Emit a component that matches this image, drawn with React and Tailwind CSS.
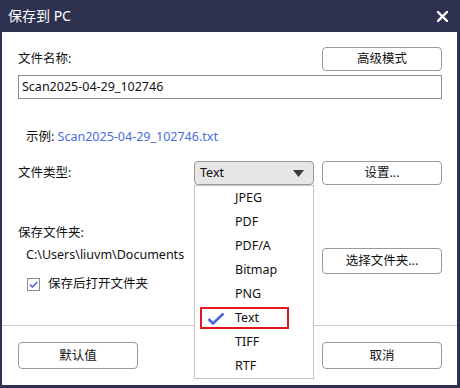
import React from 'react';

const Btn = ({ children, h = 'h-[24px]', className = '' }) => (
    <button className={`w-[120px] ${h} border border-[#9a9a9a] rounded-[4px] bg-white text-[12.5px] text-[#111] flex items-center justify-center ${className}`}>
        {children}
    </button>
);

const formats = ['JPEG', 'PDF', 'PDF/A', 'Bitmap', 'PNG', 'Text', 'TIFF', 'RTF'];

export default function App() {
    return (
        <div className="w-[460px] h-[388px] bg-[#2e3250] pl-[2px] pr-[3px] pb-[3px] flex flex-col font-['Noto_Sans','Noto_Sans_CJK_SC',sans-serif] text-[12.5px] leading-[18px] text-[#111]">
            {/* title bar */}
            <div className="h-[32px] shrink-0 flex items-center justify-between pl-[6px] pr-[9px] text-white">
                <span className="text-[14px]">保存到 PC</span>
                <svg width="11" height="11" viewBox="0 0 11 11">
                    <path d="M1 1 L10 10 M10 1 L1 10" stroke="white" strokeWidth="2.4" strokeLinecap="square" />
                </svg>
            </div>

            <div className="flex-1 bg-white flex flex-col">
                <div className="flex-1 pl-[16px] pr-[15px] pt-[15px]">
                    <div className="flex items-center justify-between h-[24px]">
                        <span>文件名称:</span>
                        <Btn>高级模式</Btn>
                    </div>
                    <div className="mt-[4px] h-[24px] border border-[#8c8c8c] flex items-center px-[3px]">
                        Scan2025-04-29_102746
                    </div>

                    <div className="mt-[29px] pl-[8px]">
                        示例: <span className="text-[#4a6ee0]">Scan2025-04-29_102746.txt</span>
                    </div>

                    <div className="mt-[15px] flex items-center h-[24px]">
                        <span className="w-[176px]">文件类型:</span>
                        <div className="relative w-[120px] h-[24px]">
                            <div className="h-full border border-[#9a9a9a] rounded-[4px] bg-[#e6e6e6] flex items-center justify-between pl-[5px] pr-[9px]">
                                <span>Text</span>
                                <svg width="11" height="7" viewBox="0 0 11 7">
                                    <path d="M0 0 H11 L5.5 7 Z" fill="#3c3c3c" />
                                </svg>
                            </div>
                            {/* open dropdown list */}
                            <div className="absolute left-0 top-full w-[120px] bg-white border border-[#c4c4c4] z-10">
                                {formats.map(f => (
                                    <div key={f} className="h-[24px] relative flex items-center pl-[40px]">
                                        {f === 'Text' && (
                                            <>
                                                <div className="absolute left-[5px] top-[1px] w-[89px] h-[22px] border-2 border-[#e3161f]" />
                                                <svg className="absolute left-[12px] top-[6px]" width="18" height="13" viewBox="0 0 18 13">
                                                    <path d="M1.5 7 L6 11.5 L16.5 1.5" fill="none" stroke="#4a68e0" strokeWidth="2.6" />
                                                </svg>
                                            </>
                                        )}
                                        <span>{f}</span>
                                    </div>
                                ))}
                            </div>
                        </div>
                        <Btn className="ml-auto">设置...</Btn>
                    </div>

                    <div className="mt-[39px]">保存文件夹:</div>

                    <div className="mt-[4px] flex items-start justify-between">
                        <div className="flex flex-col">
                            <div className="pl-[8px] h-[18px]">C:\Users\liuvm\Documents</div>
                            <div className="mt-[11px] flex items-center h-[18px] pl-[9px]">
                                <div className="w-[13px] h-[13px] border border-[#8a8a8a] flex items-center justify-center">
                                    <svg width="9" height="7" viewBox="0 0 9 7">
                                        <path d="M0.8 3.5 L3.3 6 L8.3 1" fill="none" stroke="#4a68e0" strokeWidth="1.6" />
                                    </svg>
                                </div>
                                <span className="ml-[8px]">保存后打开文件夹</span>
                            </div>
                        </div>
                        <Btn h="h-[26px]" className="mt-[2px]">选择文件夹...</Btn>
                    </div>
                </div>

                <div className="border-t border-[#cccccc] pl-[16px] pr-[15px] pt-[16px] pb-[16px] flex justify-between">
                    <Btn h="h-[27px]">默认值</Btn>
                    <Btn h="h-[27px]">取消</Btn>
                </div>
            </div>
        </div>
    );
}
